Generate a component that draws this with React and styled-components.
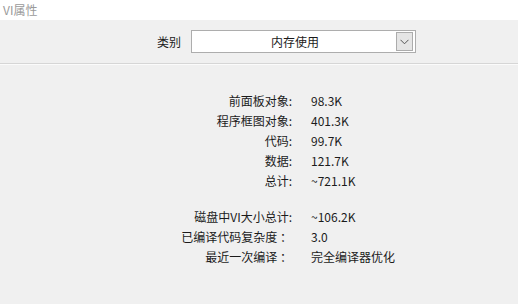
import React from "react";
import styled, { createGlobalStyle } from "styled-components";

const GlobalStyle = createGlobalStyle`
  html, body {
    margin: 0;
    padding: 0;
    background: #f0f0f0;
  }
  body {
    font-family: "Noto Sans CJK SC", "Liberation Sans", sans-serif;
    font-size: 12px;
    color: #1b1b1b;
  }
`;

const Window = styled.div`
  width: 518px;
  height: 304px;
  background: #f0f0f0;
  overflow: hidden;
`;

const TitleBar = styled.div`
  height: 20px;
  background: #ffffff;
  color: #9a9a9a;
  font-size: 12px;
  line-height: 20px;
  padding-left: 3px;
`;

const TopBar = styled.div`
  height: 43px;
  display: flex;
  align-items: center;
  padding-left: 157px;
  border-bottom: 1px solid #d6d6d6;
  box-shadow: 0 1px 0 #fbfbfb;
`;

const CategoryLabel = styled.span`
  width: 34px;
  line-height: 20px;
`;

const Combo = styled.div`
  width: 223px;
  height: 21px;
  display: flex;
  align-items: center;
  background: #ffffff;
  border: 1px solid #adadad;
`;

const ComboText = styled.span`
  flex: 1;
  text-align: center;
  line-height: 20px;
  padding-left: 2px;
`;

const DropButton = styled.div`
  width: 15px;
  height: 17px;
  margin-right: 2px;
  display: flex;
  align-items: center;
  justify-content: center;
  background: #e5e5e5;
  border: 1px solid #acacac;
`;

const Info = styled.div`
  display: grid;
  grid-template-columns: 292px auto;
  column-gap: 19px;
  padding-top: 27px;
`;

const Label = styled.div`
  text-align: right;
  line-height: 20px;
  white-space: nowrap;
  margin-top: ${(p) => (p.$gap ? "16px" : "0")};
`;

const Value = styled.div`
  line-height: 20px;
  white-space: nowrap;
  margin-top: ${(p) => (p.$gap ? "16px" : "0")};
`;

const rows = [
  ["前面板对象:", "98.3K"],
  ["程序框图对象:", "401.3K"],
  ["代码:", "99.7K"],
  ["数据:", "121.7K"],
  ["总计:", "~721.1K"],
  ["磁盘中VI大小总计:", "~106.2K", true],
  ["已编译代码复杂度 ：", "3.0"],
  ["最近一次编译 ：", "完全编译器优化"],
];

export default function App() {
  return (
    <Window>
      <GlobalStyle />
      <TitleBar>VI属性</TitleBar>
      <TopBar>
        <CategoryLabel>类别</CategoryLabel>
        <Combo>
          <ComboText>内存使用</ComboText>
          <DropButton>
            <svg width="9" height="6" viewBox="0 0 9 6">
              <path d="M0.5 0.8 L4.5 4.8 L8.5 0.8" fill="none" stroke="#555" strokeWidth="1" />
            </svg>
          </DropButton>
        </Combo>
      </TopBar>
      <Info>
        {rows.map(([label, value, gap]) => (
          <React.Fragment key={label}>
            <Label $gap={gap}>{label}</Label>
            <Value $gap={gap}>{value}</Value>
          </React.Fragment>
        ))}
      </Info>
    </Window>
  );
}
